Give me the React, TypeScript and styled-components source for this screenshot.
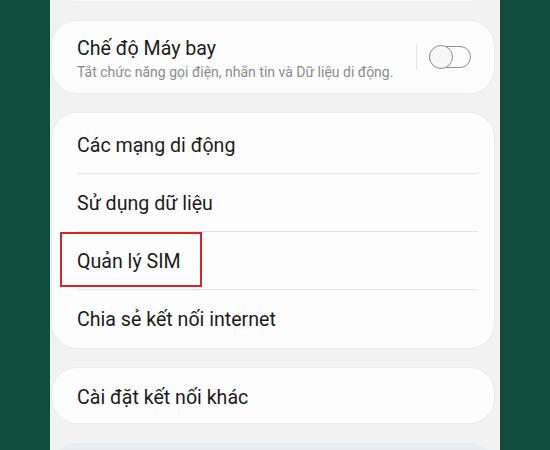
import styled, { createGlobalStyle } from "styled-components";

const GlobalStyle = createGlobalStyle`
  html, body {
    margin: 0;
    padding: 0;
    background: #0f4c3e;
  }
  body {
    font-family: Roboto, "Noto Sans", sans-serif;
  }
`;

const menuRows = [
  "Các mạng di động",
  "Sử dụng dữ liệu",
  "Quản lý SIM",
  "Chia sẻ kết nối internet",
];

export default function App() {
  return (
    <>
      <GlobalStyle />
      <Page>
        <SideBar />
        <Screen>
          <TopCard />
          <Card>
            <AirplaneRow>
              <TextBlock>
                <Title>Chế độ Máy bay</Title>
                <Subtitle>
                  Tắt chức năng gọi điện, nhắn tin và Dữ liệu di động.
                </Subtitle>
              </TextBlock>
              <VerticalRule />
              <Switch>
                <Thumb />
              </Switch>
            </AirplaneRow>
          </Card>
          <Card $padded>
            {menuRows.map((label, index) => (
              <MenuRow key={label} $last={index === menuRows.length - 1}>
                {label}
                {label === "Quản lý SIM" && <Highlight />}
              </MenuRow>
            ))}
          </Card>
          <Card>
            <SingleRow>Cài đặt kết nối khác</SingleRow>
          </Card>
          <BottomCard />
        </Screen>
        <SideBar />
      </Page>
    </>
  );
}

const Page = styled.div`
  display: flex;
  width: 550px;
  height: 450px;
  overflow: hidden;
`;

const SideBar = styled.div`
  flex: 0 0 50px;
  background: #0f4c3e;
`;

const Screen = styled.div`
  flex: 1;
  display: flex;
  flex-direction: column;
  gap: 18px;
  padding: 0 5px 0 1px;
  background: #f2f2f2;
  overflow: hidden;
`;

const Card = styled.div<{ $padded?: boolean }>`
  flex-shrink: 0;
  background: #fdfdfd;
  border: 1px solid #ececec;
  border-radius: 26px;
  padding: ${(p) => (p.$padded ? "3px 0 1px" : "0")};
`;

const TopCard = styled.div`
  flex-shrink: 0;
  height: 40px;
  margin-top: -38px;
  background: #fdfdfd;
  border-radius: 0 0 26px 26px;
  box-sizing: border-box;
  border-bottom: 1px solid #ececec;
  position: relative;

  &::after {
    content: "";
    position: absolute;
    left: 22px;
    right: 16px;
    bottom: 1px;
    height: 1px;
    background: #e8e8e8;
  }
`;

const BottomCard = styled.div`
  flex-shrink: 0;
  height: 60px;
  margin-top: 1px;
  background: #e9edf1;
  border-radius: 26px;
`;

const AirplaneRow = styled.div`
  display: flex;
  align-items: center;
  height: 72px;
  padding: 0 23px 0 25px;
`;

const TextBlock = styled.div`
  flex: 1;
  display: flex;
  flex-direction: column;
  padding-top: 2px;
`;

const Title = styled.div`
  font-size: 19.6px;
  line-height: 24px;
  color: #1b1b1b;
`;

const Subtitle = styled.div`
  margin-top: 3px;
  font-size: 14px;
  line-height: 16px;
  color: #8c8c8c;
`;

const VerticalRule = styled.div`
  width: 1px;
  height: 26px;
  margin-right: 12px;
  background: #e4e4e4;
`;

const Switch = styled.div`
  position: relative;
  width: 40px;
  height: 20px;
  border: 1.5px solid #8f8f8f;
  border-radius: 12px;
`;

const Thumb = styled.div`
  position: absolute;
  left: -1.5px;
  top: -2.5px;
  width: 22px;
  height: 22px;
  border: 1.5px solid #8f8f8f;
  border-radius: 50%;
  background: #f7f7f7;
`;

const MenuRow = styled.div<{ $last: boolean }>`
  position: relative;
  height: 55px;
  padding: 2px 16px 0 25px;
  display: flex;
  align-items: center;
  font-size: 19.6px;
  color: #1b1b1b;
  box-sizing: content-box;

  &::after {
    content: "";
    display: ${(p) => (p.$last ? "none" : "block")};
    position: absolute;
    left: 25px;
    right: 16px;
    bottom: -1px;
    height: 1px;
    background: #e4e4e4;
  }

  & + & {
    margin-top: 1px;
  }
`;

const Highlight = styled.div`
  position: absolute;
  left: 8px;
  top: 0;
  width: 138px;
  height: 51px;
  border: 2px solid #d0262e;
`;

const SingleRow = styled.div`
  height: 52px;
  padding: 3px 16px 0 25px;
  display: flex;
  align-items: center;
  font-size: 19.6px;
  color: #1b1b1b;
`;
